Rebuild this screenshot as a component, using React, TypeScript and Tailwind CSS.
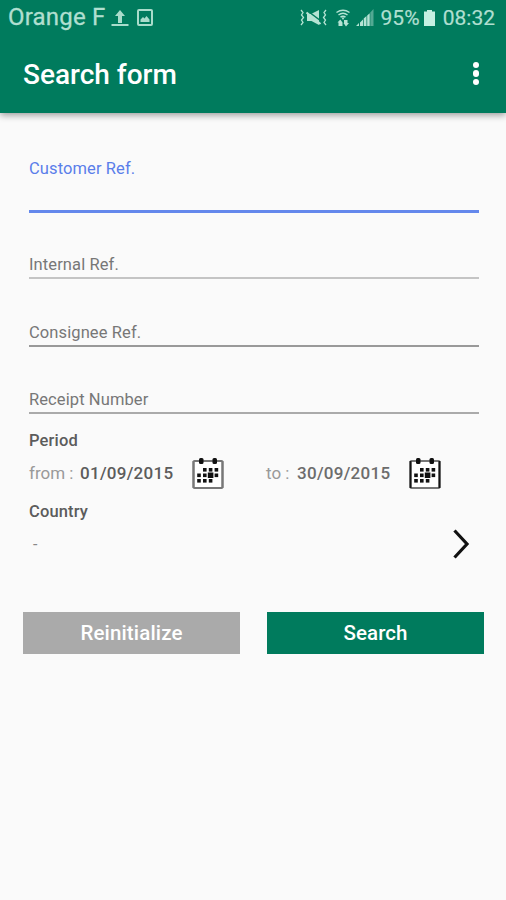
function UploadIcon() {
  return (
    <svg className="ml-[5px] mt-[9px] h-[18px] w-[18px] shrink-0" viewBox="0 0 18 18" fill="#a9dccb">
      <path d="M9 1 14 7H11V14H7V7H4Z" />
      <rect x="0.5" y="15" width="17" height="2" />
    </svg>
  );
}

function PictureIcon() {
  return (
    <svg className="ml-[8px] mt-[9px] h-[17px] w-[16px] shrink-0" viewBox="0 0 16 17">
      <rect x="1" y="1" width="14" height="15" rx="1" fill="none" stroke="#a9dccb" strokeWidth="2" />
      <path d="M3.5 13V10.5L6 8 7.5 9.5 9.5 7 12.5 10.5V13Z" fill="#a9dccb" />
    </svg>
  );
}

function MutedVibrateIcon() {
  return (
    <svg className="mt-[9px] h-[17px] w-[27px] shrink-0" viewBox="0 0 27 17" fill="none" stroke="#b5e3d4">
      <path d="M1 1 3 3.500 1.500 6 3.500 8.500 1.500 11 3 13.500 1 16M26 1 24 3.500 25.500 6 23.500 8.500 25.500 11 24 13.500 26 16" strokeWidth="1.300" />
      <path d="M7 5V12H11.500L19 16V1L11 5Z" fill="#b5e3d4" stroke="none" />
      <path d="M9 3 21 12" stroke="#007b5d" strokeWidth="1.500" />
      <path d="M6.500 3.500 20.500 15" strokeWidth="2.200" />
    </svg>
  );
}

function WifiIcon() {
  return (
    <svg className="ml-[9px] mt-[9px] h-[18px] w-[14px] shrink-0" viewBox="0 0 14 18" fill="none" stroke="#b5e3d4">
      <path d="M.5 3.500Q7-1 13.500 3.500M2.500 6Q7 2.500 11.500 6M4.500 8.200Q7 6.200 9.500 8.200" strokeWidth="1.500" />
      <path d="M5.500 8.500H8.500L7 11Z" fill="#b5e3d4" stroke="none" />
      <path d="M1.500 13.500 4.300 10.500 6.500 13.500V17H2.500V13.500ZM8 11H11.500V14H13L10 17.500 7.500 14H8Z" fill="#b5e3d4" stroke="none" />
    </svg>
  );
}

function SignalIcon() {
  return (
    <svg className="ml-[6px] mt-[9px] h-[18px] w-[18px] shrink-0" viewBox="0 0 18 18" fill="#b5e3d4">
      <path d="M0 17 3 14V17ZM4 13.500 7 10.500V17H4ZM7.700 9.500 10.500 7V17H7.700ZM11.200 6.500 13.700 4.200V17H11.200Z" />
      <path d="M14.300 3.500 17.500 0V17H14.300Z" opacity=".45" />
    </svg>
  );
}

function BatteryIcon() {
  return (
    <svg className="ml-[4px] mt-[10px] h-[16px] w-[11px] shrink-0" viewBox="0 0 11 16" fill="#c5f0e2">
      <path d="M3 0H8V1.500H11V16H0V1.500H3Z" />
    </svg>
  );
}

const CALENDAR_DAYS = [
  [11, 11], [16.8, 11], [22.6, 11],
  [5.2, 16.5], [11, 16.5], [16.8, 16.5], [22.6, 16.5],
  [5.2, 22], [11, 22], [16.8, 22],
];

function CalendarIcon({ sides }: { sides: string }) {
  return (
    <svg className="mb-[2px] h-[33px] w-[32px] shrink-0" viewBox="0 0 32 33">
      <rect x="1.500" y="4" width="29" height="27" rx="1" fill="#fff" stroke="#777" strokeWidth="2" />
      <path d="M1.500 4V31M30.500 4V31" stroke={sides} strokeWidth="2" />
      <rect x="7" y="1" width="4.500" height="6" rx="1.500" fill="#111" />
      <rect x="20.500" y="1" width="4.500" height="6" rx="1.500" fill="#111" />
      {CALENDAR_DAYS.map(([x, y]) => (
        <rect key={`${x}-${y}`} x={x} y={y} width="3.600" height="3.600" fill="#111" />
      ))}
      <rect x="15.800" y="15.500" width="5.600" height="5.500" fill="#111" />
    </svg>
  );
}

function Field({ label, className }: { label: string; className: string }) {
  return (
    <div className={`ml-[29px] mr-[27px] flex flex-col justify-end ${className}`}>
      <span className="text-[16.5px] leading-[20px] tracking-[0.1px]">{label}</span>
    </div>
  );
}

export default function App() {
  return (
    <div className="flex h-[900px] w-[506px] flex-col overflow-hidden bg-[#fafafa] font-['Roboto',sans-serif] text-[#777]">
      <header className="h-[113px] shrink-0 bg-[#007b5d] shadow-[0_2px_7px_rgba(0,0,0,0.4)]">
        <div className="flex h-[36px] items-start justify-between pl-[8px] pr-[11px] text-[#b0dfd0]">
          <div className="flex">
            <span className="whitespace-nowrap text-[24px] leading-[34px] tracking-[0.2px] [-webkit-text-stroke:0.3px_#b0dfd0]">Orange F</span>
            <UploadIcon />
            <PictureIcon />
          </div>
          <div className="flex">
            <MutedVibrateIcon />
            <WifiIcon />
            <SignalIcon />
            <span className="ml-[6px] text-[21px] leading-[37px] tracking-[0.1px] [-webkit-text-stroke:0.2px_#b0dfd0]">95%</span>
            <BatteryIcon />
            <span className="ml-[8px] text-[21px] leading-[37px] [-webkit-text-stroke:0.2px_#b0dfd0]">08:32</span>
          </div>
        </div>
        <div className="flex h-[77px] items-center justify-between pl-[23px] pr-[27px]">
          <h1 className="text-[28px] font-medium leading-[32px] text-white">Search form</h1>
          <div className="flex flex-col gap-[2px] pb-[2px]">
            <i className="size-[6.5px] rounded-full bg-white" />
            <i className="size-[6.5px] rounded-full bg-white" />
            <i className="size-[6.5px] rounded-full bg-white" />
          </div>
        </div>
      </header>

      <main className="flex flex-col">
        <Field label="Customer Ref." className="h-[100px] border-b-[3px] border-[#6488ec] pb-[31px] text-[#5a7eea]" />
        <Field label="Internal Ref." className="h-[66px] border-b-2 border-[#c4c4c4] pb-[2px]" />
        <Field label="Consignee Ref." className="h-[68px] border-b-2 border-[#999] pb-[2px]" />
        <Field label="Receipt Number" className="h-[67px] border-b-2 border-[#aaa] pb-[2px]" />

        <h2 className="ml-[29px] mt-[17px] text-[16.5px] font-medium leading-[20px] tracking-[0.15px] text-[#5c5c5c]">Period</h2>
        <div className="mt-[5px] flex h-[36px] items-center pl-[29px] text-[17px]">
          <span className="w-[51px] text-[#999]">from :</span>
          <span className="w-[112px] font-medium tracking-[0.28px] text-[#5c5c5c]">01/09/2015</span>
          <CalendarIcon sides="#777" />
          <span className="ml-[42px] w-[31px] text-[#999]">to :</span>
          <span className="w-[112px] font-medium tracking-[0.28px] text-[#6c6c6c]">30/09/2015</span>
          <CalendarIcon sides="#151515" />
        </div>
        <h2 className="ml-[29px] mt-[10px] text-[16.5px] font-medium leading-[20px] tracking-[0.15px] text-[#5c5c5c]">Country</h2>
        <div className="mt-[6px] flex h-[32px] items-center justify-between pl-[33px] pr-[36px]">
          <span className="pt-[2px] text-[16px] text-[#888]">-</span>
          <svg className="h-[30px] w-[17px]" viewBox="0 0 17 30" fill="none" stroke="#111" strokeWidth="3.200">
            <path d="M1.500 1.500 14 15 1.500 28.500" />
          </svg>
        </div>

        <div className="ml-[23px] mr-[22px] mt-[52px] grid h-[42px] grid-cols-[217px_217px] justify-between text-[20.5px] font-medium text-white">
          <button className="bg-[#aaaaaa] tracking-[0.15px]">Reinitialize</button>
          <button className="bg-[#007b5d] tracking-[0.1px]">Search</button>
        </div>
      </main>
    </div>
  );
}
